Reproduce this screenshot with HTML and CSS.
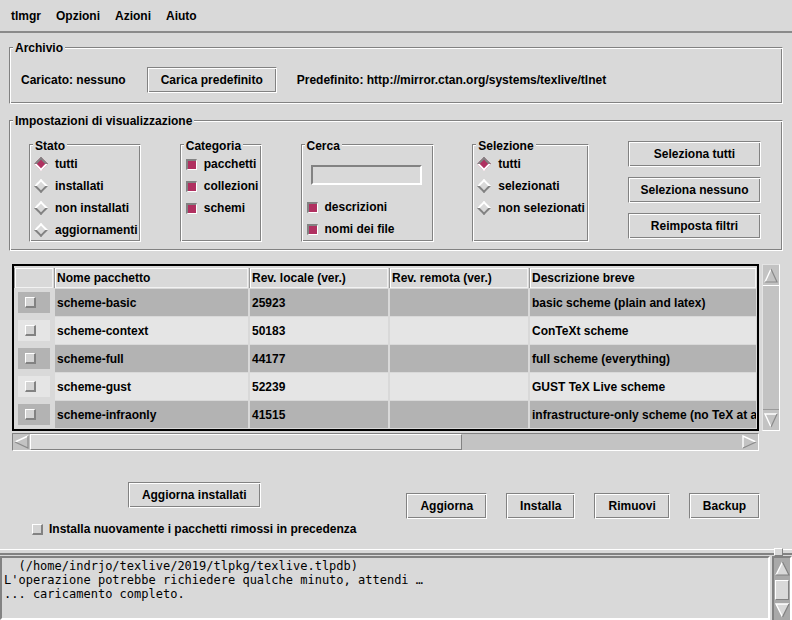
FILE: index.html
```html
<!DOCTYPE html>
<html lang="it">
<head>
<meta charset="utf-8">
<title>tlmgr</title>
<link rel="stylesheet" href="styles.css">
</head>
<body>
<div class="menubar"><span>tlmgr</span><span>Opzioni</span><span>Azioni</span><span>Aiuto</span></div>

<section class="frame archive">
  <div class="frame-title">Archivio</div>
  <div class="archive-row">
    <span>Caricato: nessuno</span>
    <button class="btn load-btn">Carica predefinito</button>
    <span class="default-repo">Predefinito: http://mirror.ctan.org/systems/texlive/tlnet</span>
  </div>
</section>

<section class="frame settings">
  <div class="frame-title">Impostazioni di visualizzazione</div>
  <div class="settings-row">
    <div class="frame group stato">
      <div class="frame-title">Stato</div>
      <div class="opt"><span class="radio on"></span>tutti</div>
      <div class="opt"><span class="radio"></span>installati</div>
      <div class="opt"><span class="radio"></span>non installati</div>
      <div class="opt"><span class="radio"></span>aggiornamenti</div>
    </div>
    <div class="frame group categoria">
      <div class="frame-title">Categoria</div>
      <div class="opt"><span class="check on"></span>pacchetti</div>
      <div class="opt"><span class="check on"></span>collezioni</div>
      <div class="opt"><span class="check on"></span>schemi</div>
    </div>
    <div class="frame group cerca">
      <div class="frame-title">Cerca</div>
      <div class="entry"></div>
      <div class="opt"><span class="check on"></span>descrizioni</div>
      <div class="opt"><span class="check on"></span>nomi dei file</div>
    </div>
    <div class="frame group selezione">
      <div class="frame-title">Selezione</div>
      <div class="opt"><span class="radio on"></span>tutti</div>
      <div class="opt"><span class="radio"></span>selezionati</div>
      <div class="opt"><span class="radio"></span>non selezionati</div>
    </div>
    <div class="btn-col">
      <button class="btn wide">Seleziona tutti</button>
      <button class="btn wide">Seleziona nessuno</button>
      <button class="btn wide">Reimposta filtri</button>
    </div>
  </div>
</section>

<div class="table-area">
  <div class="tbl">
    <div class="th"></div>
    <div class="th">Nome pacchetto</div>
    <div class="th">Rev. locale (ver.)</div>
    <div class="th">Rev. remota (ver.)</div>
    <div class="th">Descrizione breve</div>

    <div class="tcheck"><div class="tcheck-in dark"><span class="check off"></span></div></div>
    <div class="td dark">scheme-basic</div>
    <div class="td dark">25923</div>
    <div class="td dark"></div>
    <div class="td dark">basic scheme (plain and latex)</div>

    <div class="tcheck"><div class="tcheck-in light"><span class="check off"></span></div></div>
    <div class="td light">scheme-context</div>
    <div class="td light">50183</div>
    <div class="td light"></div>
    <div class="td light">ConTeXt scheme</div>

    <div class="tcheck"><div class="tcheck-in dark"><span class="check off"></span></div></div>
    <div class="td dark">scheme-full</div>
    <div class="td dark">44177</div>
    <div class="td dark"></div>
    <div class="td dark">full scheme (everything)</div>

    <div class="tcheck"><div class="tcheck-in light"><span class="check off"></span></div></div>
    <div class="td light">scheme-gust</div>
    <div class="td light">52239</div>
    <div class="td light"></div>
    <div class="td light">GUST TeX Live scheme</div>

    <div class="tcheck"><div class="tcheck-in dark"><span class="check off"></span></div></div>
    <div class="td dark">scheme-infraonly</div>
    <div class="td dark">41515</div>
    <div class="td dark"></div>
    <div class="td dark">infrastructure-only scheme (no TeX at all)</div>
  </div>

  <div class="vscroll">
    <div class="arrow"><svg width="14" height="15" viewBox="0 0 14 15"><polygon points="7,1 13,14 1,14" fill="#c3c3c3"/><path d="M1 14 L7 1" stroke="#fff" stroke-width="1.4" fill="none"/><path d="M7 1 L13 14 L1 14" stroke="#8a8a8a" stroke-width="1.2" fill="none"/></svg></div>
    <div class="vthumb"></div>
    <div class="arrow"><svg width="14" height="15" viewBox="0 0 14 15"><polygon points="1,1 13,1 7,14" fill="#c3c3c3"/><path d="M7 14 L1 1 L13 1" stroke="#fff" stroke-width="1.4" fill="none"/><path d="M13 1 L7 14" stroke="#8a8a8a" stroke-width="1.2" fill="none"/></svg></div>
  </div>

  <div class="hscroll">
    <div class="harrow"><svg width="15" height="14" viewBox="0 0 15 14"><polygon points="1,7 14,1 14,13" fill="#c3c3c3"/><path d="M14 1 L1 7" stroke="#fff" stroke-width="1.4" fill="none"/><path d="M1 7 L14 13 L14 1" stroke="#8a8a8a" stroke-width="1.2" fill="none"/></svg></div>
    <div class="hthumb"></div>
    <div class="htrough"></div>
    <div class="harrow"><svg width="15" height="14" viewBox="0 0 15 14"><polygon points="1,1 14,7 1,13" fill="#c3c3c3"/><path d="M1 13 L1 1 L14 7" stroke="#fff" stroke-width="1.4" fill="none"/><path d="M14 7 L1 13" stroke="#8a8a8a" stroke-width="1.2" fill="none"/></svg></div>
  </div>
</div>

<div class="actions">
  <div class="actions-left">
    <button class="btn">Aggiorna installati</button>
    <div class="opt reinstall"><span class="check off"></span>Installa nuovamente i pacchetti rimossi in precedenza</div>
  </div>
  <div class="actions-right">
    <button class="btn">Aggiorna</button>
    <button class="btn">Installa</button>
    <button class="btn">Rimuovi</button>
    <button class="btn">Backup</button>
  </div>
</div>

<div class="sash"><span class="sash-handle"></span></div>

<div class="log">
  <div class="log-text">  (/home/indrjo/texlive/2019/tlpkg/texlive.tlpdb)
L'operazione potrebbe richiedere qualche minuto, attendi …
... caricamento completo.</div>
  <div class="log-scroll">
    <div class="lup"><svg width="15" height="15" viewBox="0 0 15 15"><polygon points="7.5,1 14,14 1,14" fill="#d9d9d9"/><path d="M1 14 L7.5 1" stroke="#fff" stroke-width="1.4" fill="none"/><path d="M7.5 1 L14 14 L1 14" stroke="#828282" stroke-width="1.2" fill="none"/></svg></div>
    <div class="lthumb"></div>
    <div class="ldown"><svg width="15" height="15" viewBox="0 0 15 15"><polygon points="1,1 14,1 7.5,14" fill="#d9d9d9"/><path d="M7.5 14 L1 1 L14 1" stroke="#fff" stroke-width="1.4" fill="none"/><path d="M14 1 L7.5 14" stroke="#828282" stroke-width="1.2" fill="none"/></svg></div>
  </div>
</div>
</body>
</html>
```

FILE: styles.css
```css
* { box-sizing: border-box; }

body {
  margin: 0;
  width: 792px;
  height: 620px;
  overflow: hidden;
  background: #d9d9d9;
  color: #000;
  font: bold 12px "Liberation Sans", Arial, sans-serif;
}

/* menu */
.menubar {
  height: 33px;
  padding: 2px 0 0 11px;
  line-height: 29px;
  display: flex;
  gap: 15px;
  border-bottom: 2px solid #8a8a8a;
}

/* groove frames */
.frame {
  border: 1px solid;
  border-color: #828282 #fff #fff #828282;
  box-shadow: inset 1px 1px 0 #fff, inset -1px -1px 0 #828282;
}
.frame-title {
  display: table;
  margin: -7px 0 0 3px;
  padding: 0 2px;
  line-height: 14px;
  background: #d9d9d9;
}

/* buttons */
.btn {
  appearance: none;
  margin: 0;
  height: 26px;
  padding: 0 13px;
  font: inherit;
  color: #000;
  background: #d9d9d9;
  border: 1px solid;
  border-color: #828282 #fff #fff #828282;
  box-shadow: inset 1px 1px 0 #fff, inset -1px -1px 0 #828282;
  white-space: nowrap;
}
.btn.wide { width: 133px; padding: 0; }

/* archive */
.archive { margin: 14px 9px 0; padding-bottom: 10px; }
.archive-row {
  margin-top: 12px;
  padding-left: 11px;
  display: flex;
  align-items: center;
  white-space: nowrap;
}
.load-btn { margin-left: 21px; }
.default-repo { margin-left: 20px; }

/* settings */
.settings { margin: 16px 9px 0; padding-bottom: 8px; }
.settings-row {
  margin-top: 13px;
  padding: 0 21px 0 19px;
  display: flex;
  justify-content: space-between;
}
.group { margin-top: 3px; padding-top: 1px; }
.stato { width: 112px; }
.categoria { width: 82px; }
.cerca { width: 133px; }
.selezione { width: 117px; }

.opt {
  display: flex;
  align-items: center;
  height: 22px;
  white-space: nowrap;
}
.stato .opt, .selezione .opt { padding-left: 4px; gap: 7px; }
.categoria .opt, .cerca .opt { padding-left: 5px; gap: 7px; }

.radio {
  flex: none;
  display: inline-block;
  width: 10px;
  height: 10px;
  margin: 2px;
  transform: rotate(45deg);
  border: 2px solid;
  border-color: #fff #828282 #828282 #fff;
}
.radio.on {
  border-color: #828282 #fff #fff #828282;
  background: #b03060;
}

.check {
  flex: none;
  display: inline-block;
  width: 11px;
  height: 11px;
  border-style: solid;
}
.check.on {
  border-width: 2px 1px 1px 2px;
  border-color: #828282 #fff #fff #828282;
  background: #b03060;
}
.check.off {
  border-width: 1px 2px 2px 1px;
  border-color: #fff #828282 #828282 #fff;
  background: #d4d4d4;
}

.entry {
  width: 111px;
  height: 20px;
  margin: 12px 0 11px 9px;
  border: 2px solid;
  border-color: #828282 #fff #fff #828282;
}

.btn-col {
  display: flex;
  flex-direction: column;
  gap: 10px;
}

/* table */
.table-area {
  margin: 13px 0 0 12px;
  display: grid;
  grid-template-columns: 747px 18px;
  column-gap: 3px;
  row-gap: 2px;
}
.tbl {
  border: 2px solid #000;
  padding: 2px 1px 1px;
  background: #d9d9d9;
  display: grid;
  grid-template-columns: 38px 193px 138px 138px 226px;
  grid-template-rows: 20px;
  grid-auto-rows: 27px;
  column-gap: 2px;
  row-gap: 1px;
}
.th {
  line-height: 21px;
  padding-left: 2px;
  background: #d9d9d9;
  box-shadow: inset 1px 1px 0 #fff, inset -1px -1px 0 #f2f2f2, -1px 0 0 #9a9a9a;
  white-space: nowrap;
  overflow: hidden;
}
.td {
  line-height: 28px;
  padding-left: 2px;
  white-space: nowrap;
  overflow: hidden;
}
.dark { background: #b3b3b3; }
.light { background: #e5e5e5; }
.tcheck { padding: 3px; }
.tcheck-in {
  height: 100%;
  display: flex;
  align-items: center;
  padding-left: 7px;
}

.vscroll {
  display: flex;
  flex-direction: column;
  background: #c3c3c3;
  border: 1px solid;
  border-color: #e4e4e4 #fff #fff #e4e4e4;
}
.arrow {
  flex: none;
  height: 20px;
  display: flex;
  align-items: center;
  justify-content: center;
}
.vthumb {
  flex: 1;
  border-top: 1px solid #fff;
  border-bottom: 1px solid #9a9a9a;
}

.hscroll {
  display: flex;
  height: 18px;
  background: #c3c3c3;
  border: 1px solid;
  border-color: #828282 #fff #fff #828282;
}
.harrow {
  flex: none;
  width: 17px;
  display: flex;
  align-items: center;
  justify-content: center;
}
.hthumb {
  flex: none;
  width: 432px;
  background: #d9d9d9;
  border: 1px solid;
  border-color: #fff #828282 #828282 #fff;
}
.htrough { flex: 1; }

/* actions */
.actions {
  margin-top: 31px;
  padding-left: 32px;
  display: flex;
  align-items: flex-start;
}
.actions-left {
  display: flex;
  flex-direction: column;
  align-items: center;
  gap: 13px;
}
.reinstall { height: 16px; gap: 6px; }
.actions-right {
  margin: 11px 0 0 50px;
  display: flex;
  gap: 19px;
}

/* paned sash */
.sash {
  position: relative;
  margin-top: 12px;
  height: 7px;
}
.sash::before {
  content: "";
  display: block;
  margin-top: 1px;
  height: 3px;
  border-top: 1px solid #fff;
  border-bottom: 2px solid #828282;
}
.sash-handle {
  position: absolute;
  left: 774px;
  top: -1px;
  width: 9px;
  height: 8px;
  background: #d9d9d9;
  border: 1px solid;
  border-color: #fff #828282 #828282 #fff;
}

/* log */
.log {
  display: flex;
  height: 64px;
  gap: 2px;
}
.log-text {
  flex: 1;
  border: 2px solid;
  border-color: #828282 #fff #fff #828282;
  padding: 1px 2px;
  font: normal 12px/14px "DejaVu Sans Mono", monospace;
  white-space: pre;
  overflow: hidden;
}
.log-scroll {
  flex: none;
  width: 20px;
  background: #a9a9a9;
  border: 2px solid;
  border-color: #828282 #fff #fff #828282;
  border-bottom: none;
  display: flex;
  flex-direction: column;
  align-items: center;
}
.lup { height: 20px; display: flex; align-items: center; }
.lthumb {
  width: 14px;
  height: 20px;
  margin-top: 2px;
  background: #d9d9d9;
  border: 1px solid;
  border-color: #fff #828282 #828282 #fff;
}
.ldown { height: 20px; display: flex; align-items: center; }
```
